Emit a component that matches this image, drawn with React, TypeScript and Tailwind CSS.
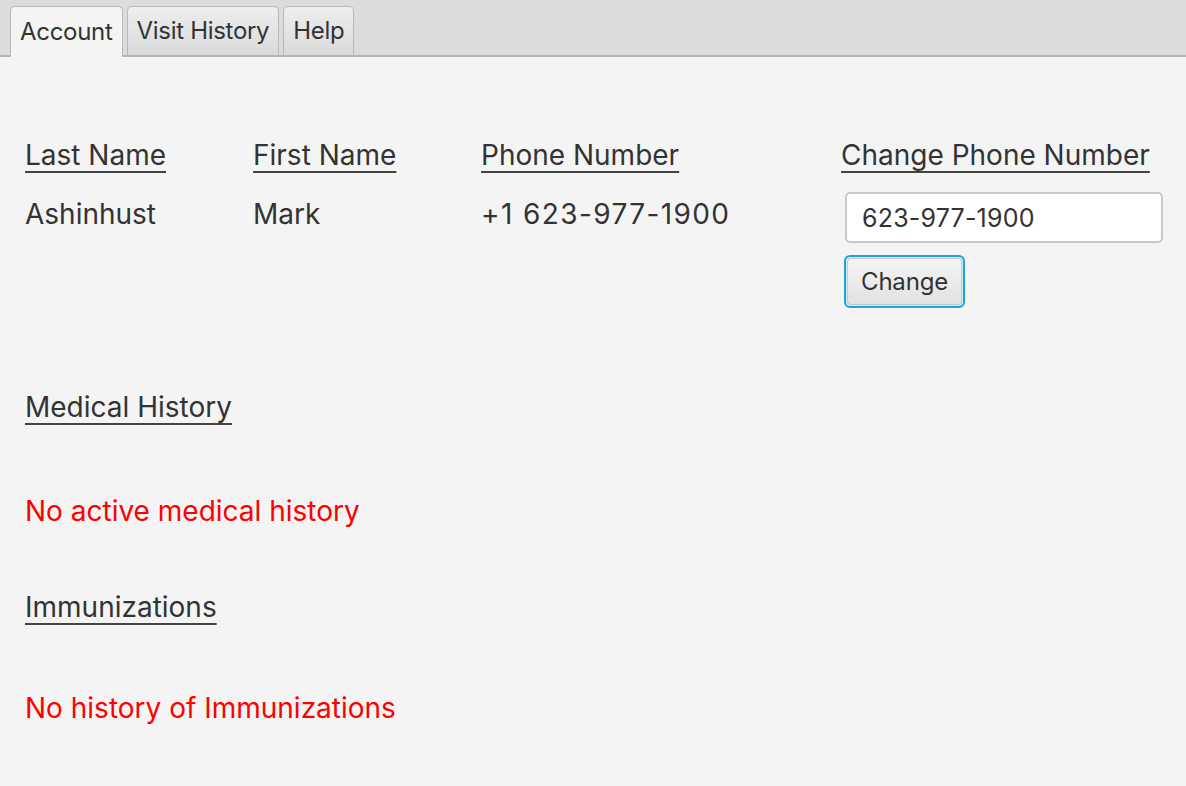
import React from 'react';

const tabs = ['Account', 'Visit History', 'Help'];

function Header({ children }: { children: React.ReactNode }) {
  return (
    <span className="underline decoration-[2px] underline-offset-[6px] decoration-[#444]">{children}</span>
  );
}

export default function App() {
  return (
    <div
      className="w-[1186px] h-[786px] bg-[#f4f4f4] text-[#333] overflow-hidden"
      style={{ fontFamily: 'Inter, "Noto Sans", sans-serif' }}
    >
      <div className="h-[57px] bg-[#dcdcdc] border-b-2 border-[#b4b4b4] flex items-end pl-[10px] gap-[4px]">
        {tabs.map((tab, i) => (
          <div
            key={tab}
            className={
              i === 0
                ? 'h-[51px] -mb-[2px] px-[9px] flex items-center text-[24px] tracking-[-0.3px] rounded-t-[5px] border border-b-0 border-[#b8b8b8] bg-[#f4f4f4]'
                : 'h-[49px] px-[9px] flex items-center text-[24px] tracking-[-0.3px] rounded-t-[5px] border border-b-0 border-[#b8b8b8] bg-gradient-to-b from-[#eeeeee] to-[#dadada]'
            }
          >
            {tab}
          </div>
        ))}
      </div>

      <div className="pl-[25px] text-[28px] leading-[32px]">
        <div className="grid grid-cols-[228px_228px_360px_1fr] mt-[82px]">
          <div><Header>Last Name</Header></div>
          <div><Header>First Name</Header></div>
          <div><Header>Phone Number</Header></div>
          <div><Header>Change Phone Number</Header></div>

          <div className="mt-[27px]">Ashinhust</div>
          <div className="mt-[27px]">Mark</div>
          <div className="mt-[27px] tracking-[1.4px]">+1 623-977-1900</div>
          <div className="mt-[21px] pl-[4px] flex flex-col items-start">
            <div className="w-[318px] h-[51px] bg-white border-2 border-[#c8c8c8] rounded-[5px] flex items-center pl-[15px] text-[25px] tracking-[0.2px]">
              623-977-1900
            </div>
            <button className="mt-[12px] -ml-[1px] w-[121px] h-[53px] rounded-[6px] border-2 border-[#1fa3d8] p-[1px] bg-[#cfe9f5]">
              <span className="w-full h-full flex items-center justify-center rounded-[4px] bg-gradient-to-b from-[#f4f4f4] to-[#e2e2e2] border border-[#c9c9c9] text-[24px] tracking-[-0.2px]">
                Change
              </span>
            </button>
          </div>
        </div>

        <div className="mt-[83px]"><Header>Medical History</Header></div>
        <div className="mt-[72px] text-[#ff0000]">No active medical history</div>
        <div className="mt-[64px]"><Header>Immunizations</Header></div>
        <div className="mt-[69px] text-[#ff0000]">No history of Immunizations</div>
      </div>
    </div>
  );
}
